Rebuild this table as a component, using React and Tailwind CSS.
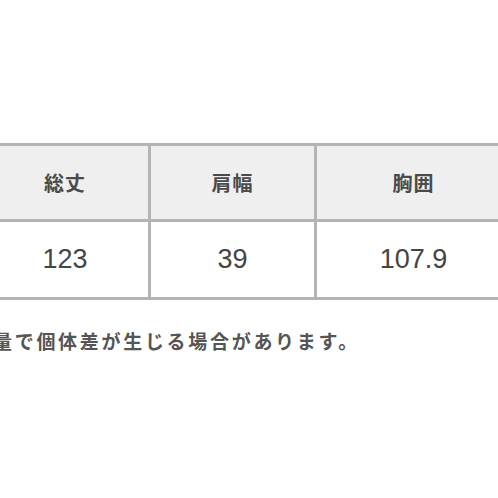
import React from 'react';

const cols = [
  { head: '総丈', value: '123', w: 'w-[166px]' },
  { head: '肩幅', value: '39', w: 'w-[166px]' },
  { head: '胸囲', value: '107.9', w: 'w-[196px]' },
];

export default function App() {
  return (
    <div className="w-[498px] h-[498px] overflow-hidden bg-white pt-[143px]">
      {/* size table, cropped on both sides */}
      <div className="flex ml-[-18px] w-max border-t-[3px] border-b-[3px] border-[#b4b4b4]">
        {cols.map((c, i) => (
          <div
            key={c.head}
            className={`${c.w} flex flex-col ${i > 0 ? 'border-l-[3px] border-[#b4b4b4]' : ''}`}
          >
            <div className="h-[76px] bg-[#efefef] border-b-[3px] border-[#b4b4b4] flex items-center justify-center">
              <span className="text-[20px] font-semibold text-[#4a4a4a] tracking-[1px] font-['Noto_Sans_CJK_JP',sans-serif]">
                {c.head}
              </span>
            </div>
            <div className="h-[75px] flex items-center justify-center">
              <span className="text-[27px] text-[#444] font-['Liberation_Sans',Arial,sans-serif]">
                {c.value}
              </span>
            </div>
          </div>
        ))}
      </div>

      {/* note below */}
      <p className="mt-[28px] ml-[-7px] whitespace-nowrap text-[19px] leading-[26px] font-bold tracking-[2.7px] text-[#555] font-['Noto_Sans_CJK_JP',sans-serif]">
        量で個体差が生じる場合があります。
      </p>
    </div>
  );
}
